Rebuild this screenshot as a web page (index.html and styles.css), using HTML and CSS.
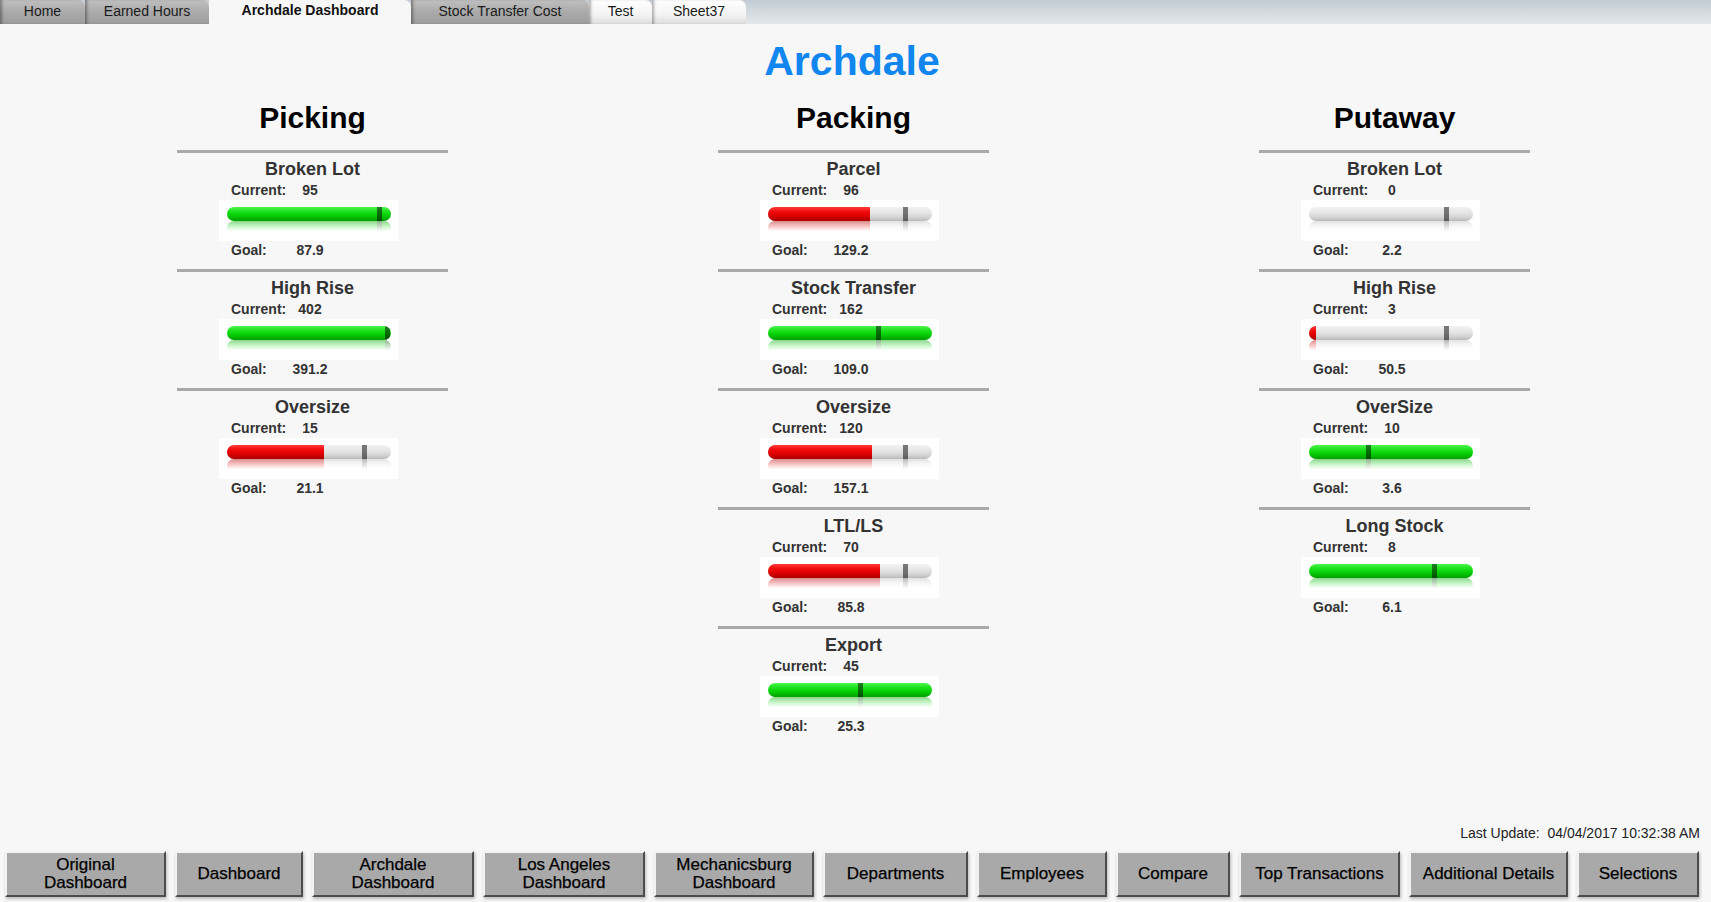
FILE: index.html
```html
<!DOCTYPE html>
<html>
<head>
<meta charset="utf-8">
<title>Archdale Dashboard</title>
<link rel="stylesheet" href="styles.css">
</head>
<body>
<div class="page">
  <nav class="tabbar">
    <div class="tab tab-dark">Home</div>
    <div class="tab tab-dark">Earned Hours</div>
    <div class="tab tab-active">Archdale Dashboard</div>
    <div class="tab tab-dark">Stock Transfer Cost</div>
    <div class="tab tab-light">Test</div>
    <div class="tab tab-light">Sheet37</div>
  </nav>

  <main class="main">
    <h1 class="site-title">Archdale</h1>
    <div class="columns">
      <section class="column">
        <h2 class="col-title">Picking</h2>
        <div class="metric">
          <div class="metric-title">Broken Lot</div>
          <div class="row"><span class="lbl">Current:</span><span class="val">95</span></div>
          <div class="gauge"><div class="track"><div class="fill green" style="width:100%"></div><div class="marker" style="left:92.5%"></div></div></div>
          <div class="row"><span class="lbl">Goal:</span><span class="val">87.9</span></div>
        </div>
        <div class="metric">
          <div class="metric-title">High Rise</div>
          <div class="row"><span class="lbl">Current:</span><span class="val">402</span></div>
          <div class="gauge"><div class="track"><div class="fill green" style="width:100%"></div><div class="marker" style="left:97.3%"></div></div></div>
          <div class="row"><span class="lbl">Goal:</span><span class="val">391.2</span></div>
        </div>
        <div class="metric">
          <div class="metric-title">Oversize</div>
          <div class="row"><span class="lbl">Current:</span><span class="val">15</span></div>
          <div class="gauge"><div class="track"><div class="fill red" style="width:59%"></div><div class="marker" style="left:83.3%"></div></div></div>
          <div class="row"><span class="lbl">Goal:</span><span class="val">21.1</span></div>
        </div>
      </section>

      <section class="column">
        <h2 class="col-title">Packing</h2>
        <div class="metric">
          <div class="metric-title">Parcel</div>
          <div class="row"><span class="lbl">Current:</span><span class="val">96</span></div>
          <div class="gauge"><div class="track"><div class="fill red" style="width:62%"></div><div class="marker" style="left:83.3%"></div></div></div>
          <div class="row"><span class="lbl">Goal:</span><span class="val">129.2</span></div>
        </div>
        <div class="metric">
          <div class="metric-title">Stock Transfer</div>
          <div class="row"><span class="lbl">Current:</span><span class="val">162</span></div>
          <div class="gauge"><div class="track"><div class="fill green" style="width:100%"></div><div class="marker" style="left:67.3%"></div></div></div>
          <div class="row"><span class="lbl">Goal:</span><span class="val">109.0</span></div>
        </div>
        <div class="metric">
          <div class="metric-title">Oversize</div>
          <div class="row"><span class="lbl">Current:</span><span class="val">120</span></div>
          <div class="gauge"><div class="track"><div class="fill red" style="width:63.7%"></div><div class="marker" style="left:83.3%"></div></div></div>
          <div class="row"><span class="lbl">Goal:</span><span class="val">157.1</span></div>
        </div>
        <div class="metric">
          <div class="metric-title">LTL/LS</div>
          <div class="row"><span class="lbl">Current:</span><span class="val">70</span></div>
          <div class="gauge"><div class="track"><div class="fill red" style="width:68%"></div><div class="marker" style="left:83.3%"></div></div></div>
          <div class="row"><span class="lbl">Goal:</span><span class="val">85.8</span></div>
        </div>
        <div class="metric">
          <div class="metric-title">Export</div>
          <div class="row"><span class="lbl">Current:</span><span class="val">45</span></div>
          <div class="gauge"><div class="track"><div class="fill green" style="width:100%"></div><div class="marker" style="left:56.2%"></div></div></div>
          <div class="row"><span class="lbl">Goal:</span><span class="val">25.3</span></div>
        </div>
      </section>

      <section class="column">
        <h2 class="col-title">Putaway</h2>
        <div class="metric">
          <div class="metric-title">Broken Lot</div>
          <div class="row"><span class="lbl">Current:</span><span class="val">0</span></div>
          <div class="gauge"><div class="track"><div class="fill red" style="width:0%"></div><div class="marker" style="left:83.3%"></div></div></div>
          <div class="row"><span class="lbl">Goal:</span><span class="val">2.2</span></div>
        </div>
        <div class="metric">
          <div class="metric-title">High Rise</div>
          <div class="row"><span class="lbl">Current:</span><span class="val">3</span></div>
          <div class="gauge"><div class="track"><div class="fill red" style="width:4.5%"></div><div class="marker" style="left:83.3%"></div></div></div>
          <div class="row"><span class="lbl">Goal:</span><span class="val">50.5</span></div>
        </div>
        <div class="metric">
          <div class="metric-title">OverSize</div>
          <div class="row"><span class="lbl">Current:</span><span class="val">10</span></div>
          <div class="gauge"><div class="track"><div class="fill green" style="width:100%"></div><div class="marker" style="left:36%"></div></div></div>
          <div class="row"><span class="lbl">Goal:</span><span class="val">3.6</span></div>
        </div>
        <div class="metric">
          <div class="metric-title">Long Stock</div>
          <div class="row"><span class="lbl">Current:</span><span class="val">8</span></div>
          <div class="gauge"><div class="track"><div class="fill green" style="width:100%"></div><div class="marker" style="left:76.3%"></div></div></div>
          <div class="row"><span class="lbl">Goal:</span><span class="val">6.1</span></div>
        </div>
      </section>
    </div>
  </main>

  <footer class="footer">
    <div class="last-update">Last Update:&nbsp;&nbsp;04/04/2017 10:32:38 AM</div>
    <div class="buttons">
      <div class="btn">Original<br>Dashboard</div>
      <div class="btn">Dashboard</div>
      <div class="btn">Archdale<br>Dashboard</div>
      <div class="btn">Los Angeles<br>Dashboard</div>
      <div class="btn">Mechanicsburg<br>Dashboard</div>
      <div class="btn">Departments</div>
      <div class="btn">Employees</div>
      <div class="btn">Compare</div>
      <div class="btn">Top Transactions</div>
      <div class="btn">Additional Details</div>
      <div class="btn">Selections</div>
    </div>
  </footer>
</div>
</body>
</html>
```

FILE: styles.css
```css
* { box-sizing: border-box; }

html, body {
  margin: 0;
  padding: 0;
  height: 100%;
}

body {
  background: #f7f7f7;
  font-family: "Liberation Sans", Arial, sans-serif;
  color: #111;
}

.page {
  height: 100vh;
  display: flex;
  flex-direction: column;
}

/* ---------- Tabs ---------- */
.tabbar {
  height: 24px;
  flex: 0 0 24px;
  display: grid;
  grid-template-columns: 85px 124px 202px 178px 63px 94px 1fr;
  background: linear-gradient(to bottom, #c3ccd4 0%, #d6dde2 60%, #e3e7ea 100%);
}

.tab {
  height: 24px;
  line-height: 23px;
  text-align: center;
  font-size: 14px;
  color: #1a1a1a;
  border-radius: 0 7px 0 0;
}

.tab-dark {
  background: linear-gradient(to bottom, #c0c0c0 0%, #aaaaaa 50%, #9e9e9e 100%);
  box-shadow: inset 3px 0 3px -1px rgba(0, 0, 0, 0.35);
}

.tab-light {
  background: linear-gradient(to bottom, #ffffff 0%, #f4f4f4 60%, #dedede 100%);
  box-shadow: inset 3px 0 3px -1px rgba(0, 0, 0, 0.3);
}

.tab-active {
  background: #f7f7f7;
  font-weight: bold;
  color: #111;
  line-height: 21px;
}

/* ---------- Main ---------- */
.main {
  flex: 1 1 auto;
}

.site-title {
  margin: 13px 0 0;
  padding-right: 7px;
  text-align: center;
  font-size: 41px;
  line-height: 48px;
  font-weight: bold;
  color: #1186ef;
}

.columns {
  display: grid;
  grid-template-columns: 271px 271px 271px;
  column-gap: 270px;
  justify-content: center;
  margin-left: -4px;
}

.col-title {
  margin: 15px 0 14px;
  text-align: center;
  font-size: 30px;
  line-height: 36px;
  font-weight: bold;
  color: #000;
}

.metric {
  border-top: 3px solid #a9a9a9;
  padding: 5px 0 9px;
}

.metric-title {
  text-align: center;
  font-size: 18px;
  line-height: 22px;
  font-weight: bold;
  color: #333;
}

.row {
  display: grid;
  grid-template-columns: 58px 42px;
  padding-left: 54px;
  font-size: 14px;
  font-weight: bold;
  color: #333;
  line-height: 20px;
}

.row:last-child {
  line-height: 19px;
}

.val {
  text-align: center;
}

.gauge {
  width: 179px;
  height: 41px;
  margin-left: 42px;
  background: #ffffff;
  padding: 7px 0 0 8px;
}

.track {
  position: relative;
  width: 164px;
  height: 14px;
  border-radius: 7px;
  overflow: hidden;
  background: linear-gradient(to bottom, #f2f2f2 0%, #e4e4e4 45%, #d2d2d2 75%, #b9b9b9 100%);
  -webkit-box-reflect: below 0px linear-gradient(to bottom, transparent 25%, rgba(0, 0, 0, 0.45) 100%);
}

.fill {
  height: 100%;
}

.fill.green {
  background: linear-gradient(to bottom, #50f550 0%, #1fe31f 30%, #07d007 60%, #009e00 100%);
}

.fill.red {
  background: linear-gradient(to bottom, #ff3a3a 0%, #f00a0a 35%, #dc0000 65%, #a80000 100%);
}

.marker {
  position: absolute;
  top: 0;
  width: 5px;
  height: 100%;
  margin-left: -2px;
  background: rgba(0, 0, 0, 0.5);
}

/* ---------- Footer ---------- */
.footer {
  flex: 0 0 auto;
  padding-bottom: 5px;
}

.last-update {
  text-align: right;
  padding-right: 11px;
  font-size: 14px;
  line-height: 16px;
  color: #222;
  margin-bottom: 10px;
}

.buttons {
  display: grid;
  grid-template-columns: 161px 128px 162px 162px 160px 145px 130px 114px 161px 159px 122px;
  column-gap: 9px;
  padding-left: 5px;
}

.btn {
  height: 46px;
  display: flex;
  align-items: center;
  justify-content: center;
  text-align: center;
  font-size: 17px;
  line-height: 18px;
  color: #000;
  background: #a9a9a9;
  border: 2px solid;
  border-color: #f2f2f2 #4c4c4c #4c4c4c #f2f2f2;
  box-shadow: 1px 2px 3px rgba(0, 0, 0, 0.25);
  -webkit-text-stroke: 0.25px #000;
}
```
